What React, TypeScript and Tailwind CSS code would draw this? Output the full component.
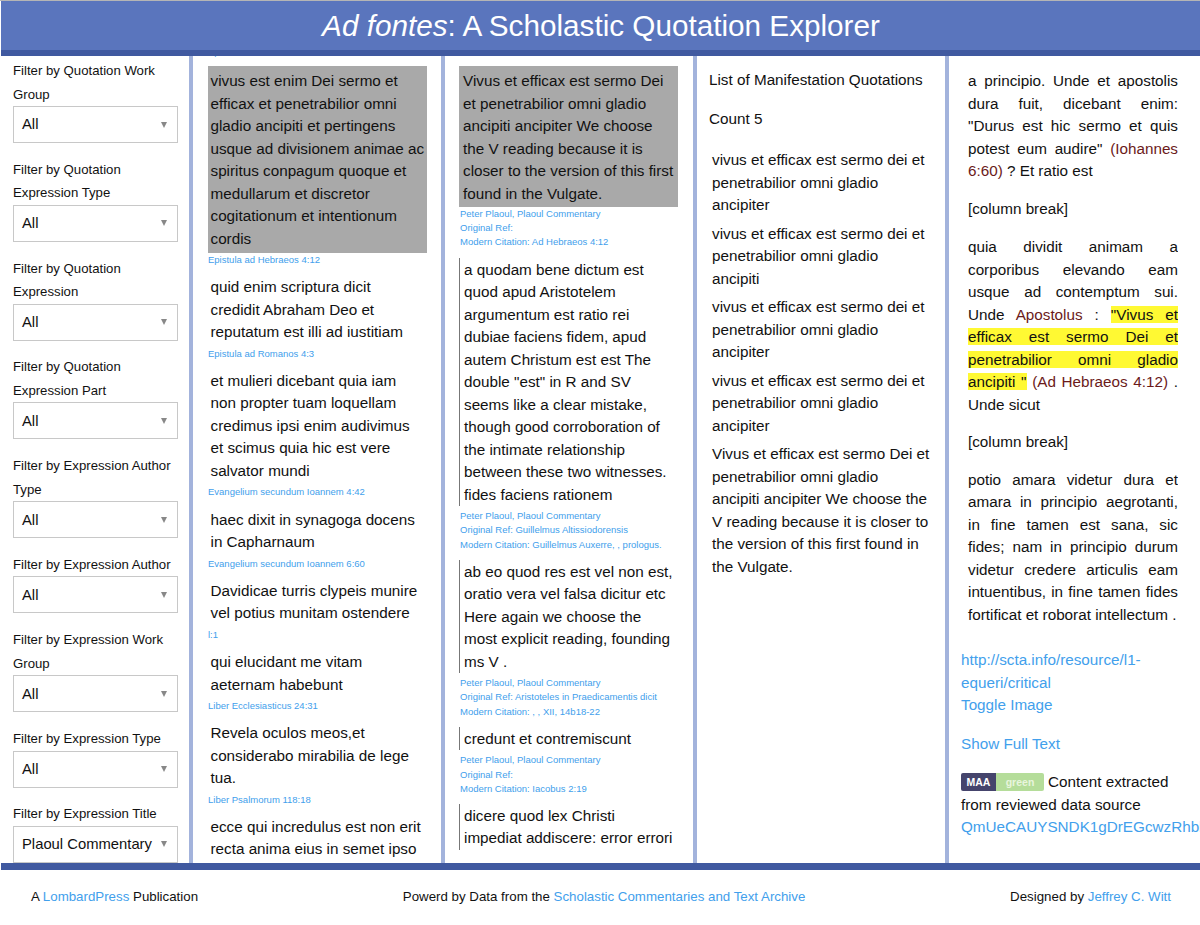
const sidebarFilters = [
  { label: "Filter by Quotation Work Group", value: "All" },
  { label: "Filter by Quotation Expression Type", value: "All" },
  { label: "Filter by Quotation Expression", value: "All" },
  { label: "Filter by Quotation Expression Part", value: "All" },
  { label: "Filter by Expression Author Type", value: "All" },
  { label: "Filter by Expression Author", value: "All" },
  { label: "Filter by Expression Work Group", value: "All" },
  { label: "Filter by Expression Type", value: "All" },
  { label: "Filter by Expression Title", value: "Plaoul Commentary" },
];

const expressions = [
  { text: "quid enim scriptura dicit credidit Abraham Deo et reputatum est illi ad iustitiam", ref: "Epistula ad Romanos 4:3" },
  { text: "et mulieri dicebant quia iam non propter tuam loquellam credimus ipsi enim audivimus et scimus quia hic est vere salvator mundi", ref: "Evangelium secundum Ioannem 4:42" },
  { text: "haec dixit in synagoga docens in Capharnaum", ref: "Evangelium secundum Ioannem 6:60" },
  { text: "Davidicae turris clypeis munire vel potius munitam ostendere", ref: "l:1" },
  { text: "qui elucidant me vitam aeternam habebunt", ref: "Liber Ecclesiasticus 24:31" },
  { text: "Revela oculos meos,et considerabo mirabilia de lege tua.", ref: "Liber Psalmorum 118:18" },
  { text: "ecce qui incredulus est non erit recta anima eius in semet ipso", ref: "" },
];

const instances = [
  {
    text: "a quodam bene dictum est quod apud Aristotelem argumentum est ratio rei dubiae faciens fidem, apud autem Christum est est The double \"est\" in R and SV seems like a clear mistake, though good corroboration of the intimate relationship between these two witnesses. fides faciens rationem",
    meta: ["Peter Plaoul, Plaoul Commentary", "Original Ref: Guillelmus Altissiodorensis", "Modern Citation: Guillelmus Auxerre, , prologus."],
  },
  {
    text: "ab eo quod res est vel non est, oratio vera vel falsa dicitur etc Here again we choose the most explicit reading, founding ms V .",
    meta: ["Peter Plaoul, Plaoul Commentary", "Original Ref: Aristoteles in Praedicamentis dicit", "Modern Citation: , , XII, 14b18-22"],
  },
  {
    text: "credunt et contremiscunt",
    meta: ["Peter Plaoul, Plaoul Commentary", "Original Ref:", "Modern Citation: Iacobus 2:19"],
  },
  { text: "dicere quod lex Christi impediat addiscere: error errori", meta: [] },
];

const manifestations = [
  "vivus et efficax est sermo dei et penetrabilior omni gladio ancipiter",
  "vivus et efficax est sermo dei et penetrabilior omni gladio ancipiti",
  "vivus et efficax est sermo dei et penetrabilior omni gladio ancipiter",
  "vivus et efficax est sermo dei et penetrabilior omni gladio ancipiter",
];

function Meta({ children }: { children: React.ReactNode }) {
  return <div className="text-[9.5px] leading-[14.2px] text-[#42a0ec]">{children}</div>;
}

function Column({ children }: { children: React.ReactNode }) {
  return <div className="w-[252px] shrink-0 overflow-hidden border-r-[4px] border-[#a3b3dc]">{children}</div>;
}

export default function App() {
  return (
    <div className="h-[925px] w-[1200px] overflow-hidden bg-white pl-px font-['Liberation_Sans',Arial,sans-serif] text-[#111]">
      {/* Header */}
      <div className="-ml-px h-px bg-[#b5b5b5]" />
      <div className="flex h-[49px] items-center justify-center bg-[#5a75bd] pl-px pt-[2px] text-[29.7px] text-white">
        <span><em>Ad fontes</em>: A Scholastic Quotation Explorer</span>
      </div>
      <div className="h-[6px] bg-[#4059a0]" />

      {/* Panels */}
      <div className="flex h-[807px]">
        <div className="w-[192px] shrink-0 overflow-hidden border-r-[4px] border-[#a3b3dc] pl-3 pt-[3px]">
          <div className="w-[165px]">
            {sidebarFilters.map((f) => (
              <div key={f.label} className="mb-[14.8px]">
                <div className="text-[13.2px] leading-[23.5px]">{f.label}</div>
                <div className="flex h-[37px] items-center justify-between border border-[#c8c8c8] pl-2 pr-[10px] text-[14.8px]">
                  <span className="whitespace-nowrap">{f.value}</span>
                  <span className="border-x-[3.5px] border-t-[6px] border-x-transparent border-t-[#888]" />
                </div>
              </div>
            ))}
          </div>
        </div>

        <Column>
          <div className="pl-[15px]">
            {/* previous citation, scrolled almost out of the panel */}
            <div className="-mt-[11px]"><Meta>Epistula ad Hebraeos 1:3</Meta></div>
            <div className="mt-[6.8px] w-[219px] bg-[#a9a9a9] px-[2.5px] pb-[3px] pt-[4px] text-[15.25px] leading-[22.5px]">
              vivus est enim Dei sermo et efficax et penetrabilior omni gladio ancipiti et pertingens usque ad divisionem animae ac spiritus conpagum quoque et medullarum et discretor cogitationum et intentionum cordis
            </div>
            <Meta>Epistula ad Hebraeos 4:12</Meta>
            {expressions.map((e) => (
              <div key={e.text} className="mt-[9px]">
                <div className="w-[216px] pl-[2.5px] text-[15.25px] leading-[22.5px]">{e.text}</div>
                {e.ref && <div className="mt-[3px]"><Meta>{e.ref}</Meta></div>}
              </div>
            ))}
          </div>
        </Column>

        <Column>
          <div className="pl-[14px] pt-[10px]">
            <div className="w-[219px] bg-[#a9a9a9] px-[4px] pb-[2px] pt-[4px] text-[15.25px] leading-[22.5px]">
              Vivus et efficax est sermo Dei et penetrabilior omni gladio ancipiti ancipiter We choose the V reading because it is closer to the version of this first found in the Vulgate.
            </div>
            <div className="pl-px">
              <Meta>Peter Plaoul, Plaoul Commentary</Meta>
              <Meta>Original Ref:</Meta>
              <Meta>Modern Citation: Ad Hebraeos 4:12</Meta>
            </div>
            {instances.map((q) => (
              <div key={q.text} className="mt-[8px]">
                <div className="w-[215px] border-l border-[#777] pl-1 pt-[1px] text-[15.25px] leading-[22.5px]">{q.text}</div>
                {q.meta.length > 0 && (
                  <div className="mt-[3px] pl-px">
                    {q.meta.map((m) => <Meta key={m}>{m}</Meta>)}
                  </div>
                )}
              </div>
            ))}
          </div>
        </Column>

        <Column>
          <div className="pl-3 pt-[13px] text-[15.25px] leading-[22.5px]">
            <div>List of Manifestation Quotations</div>
            <div className="mt-4">Count 5</div>
            <div className="mt-[19px] pl-[3px]">
              {manifestations.map((m, i) => (
                <div key={i} className="mb-[6px] w-[216px]">{m}</div>
              ))}
              <div className="w-[217.5px]">
                Vivus et efficax est sermo Dei et penetrabilior omni gladio ancipiti ancipiter We choose the V reading because it is closer to the version of this first found in the Vulgate.
              </div>
            </div>
          </div>
        </Column>

        <div className="w-[251px] shrink-0 overflow-hidden pl-3">
          <div className="h-[566px] w-[217px] overflow-hidden pl-[7px] pt-[14px] text-justify text-[15.25px] leading-[22.5px]">
            <p>
              a principio. Unde et apostolis dura fuit, dicebant enim: "Durus est hic sermo et quis potest eum audire" <span className="text-[#6b1a1a]">(Iohannes 6:60)</span> ? Et ratio est
            </p>
            <p className="mt-[15.5px]">[column break]</p>
            <p className="mt-[15.5px]">
              quia dividit animam a corporibus elevando eam usque ad contemptum sui. Unde <span className="text-[#6b1a1a]">Apostolus</span> : <span className="bg-[#fff933]">"Vivus et efficax est sermo Dei et penetrabilior omni gladio ancipiti "</span> <span className="text-[#6b1a1a]">(Ad Hebraeos 4:12)</span> . Unde sicut
            </p>
            <p className="mt-[14.5px]">[column break]</p>
            <p className="mt-[15.5px]">
              potio amara videtur dura et amara in principio aegrotanti, in fine tamen est sana, sic fides; nam in principio durum videtur credere articulis eam intuentibus, in fine tamen fides fortificat et roborat intellectum .
            </p>
          </div>
          <div className="mt-[27px] w-[217px] text-[15.25px] leading-[22.5px] text-[#42a0ec]">
            <div>http://scta.info/resource/l1-<br />equeri/critical</div>
            <div>Toggle Image</div>
            <div className="mt-4">Show Full Text</div>
          </div>
          <div className="mt-[16px] whitespace-nowrap text-[15.25px] leading-[22.5px]">
            <div className="flex items-center gap-1">
              <span className="flex h-[18px] w-[83px] overflow-hidden rounded-[2px] text-[10.5px] font-bold leading-[18px]">
                <span className="w-[35px] bg-[#45446c] text-center text-white">MAA</span>
                <span className="flex-1 bg-[#b5dd9a] text-center text-[#e8f5dd]">green</span>
              </span>
              Content extracted
            </div>
            <div>from reviewed data source</div>
            <div className="text-[#42a0ec]">QmUeCAUYSNDK1gDrEGcwzRhbbd</div>
          </div>
        </div>
      </div>

      <div className="h-[7px] bg-[#4059a0]" />

      {/* Footer */}
      <div className="flex items-center justify-between pl-[30px] pr-[29px] pt-[18px] text-[13.3px] leading-[18px]">
        <div>A <a className="text-[#42a0ec]">LombardPress</a> Publication</div>
        <div>Powerd by Data from the <a className="text-[#42a0ec]">Scholastic Commentaries and Text Archive</a></div>
        <div>Designed by <a className="text-[#42a0ec]">Jeffrey C. Witt</a></div>
      </div>
    </div>
  );
}
